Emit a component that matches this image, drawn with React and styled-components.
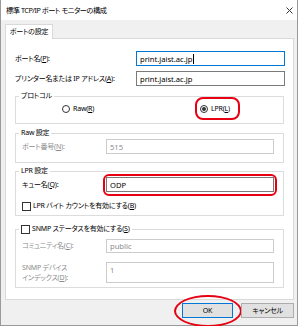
import React from 'react';
import styled, { createGlobalStyle } from 'styled-components';

const GlobalStyle = createGlobalStyle`
  html, body {
    margin: 0;
    padding: 0;
    background: #ffffff;
  }
  body {
    font-family: "Noto Sans", "Noto Sans CJK JP", sans-serif;
    font-size: 7px;
    letter-spacing: -0.2px;
    font-feature-settings: "palt" 1;
    color: #000000;
  }
  u {
    text-underline-offset: 1px;
  }
`;

const App = () => {
  return (
    <>
      <GlobalStyle />
      <Window>
        <TitleBar>
          <Title>標準 TCP/IP ポート モニターの構成</Title>
          <CloseIcon width="7" height="7" viewBox="0 0 7 7">
            <path d="M0.5 0.5 L6.5 6.5 M6.5 0.5 L0.5 6.5" stroke="#333333" strokeWidth="1" />
          </CloseIcon>
        </TitleBar>
        <Body>
          <TabStrip>
            <Tab>ポートの設定</Tab>
          </TabStrip>
          <Panel>
            <FieldRow $top={12}>
              <Label>ポート名(<u>P</u>):</Label>
              <Field $focus>
                print.jaist.ac.jp<Caret />
              </Field>
            </FieldRow>
            <FieldRow $top={5}>
              <Label>プリンター名または IP アドレス(<u>A</u>):</Label>
              <Field>print.jaist.ac.jp</Field>
            </FieldRow>

            <Group $top={4} $height={34}>
              <Legend>プロトコル</Legend>
              <RadioRow>
                <Choice>
                  <Radio />
                  <span>Raw(<u>R</u>)</span>
                </Choice>
                <Choice $marked>
                  <Radio $checked />
                  <span>LPR(<u>L</u>)</span>
                </Choice>
              </RadioRow>
            </Group>

            <Group $top={3} $height={36}>
              <Legend>Raw 設定</Legend>
              <GroupRow $top={0}>
                <Label $disabled>ポート番号(<u>N</u>):</Label>
                <Field $disabled>515</Field>
              </GroupRow>
            </Group>

            <Group $top={2} $height={51}>
              <Legend>LPR 設定</Legend>
              <GroupRow $top={0}>
                <Label>キュー名(<u>Q</u>):</Label>
                <Marked>
                  <Field>ODP</Field>
                </Marked>
              </GroupRow>
              <CheckRow>
                <Check />
                <span>LPR バイト カウントを有効にする(<u>B</u>)</span>
              </CheckRow>
            </Group>

            <Group $top={7} $height={65}>
              <Legend>
                <Check />
                <span>SNMP ステータスを有効にする(<u>S</u>)</span>
              </Legend>
              <GroupRow $top={4} $height={14}>
                <Label $disabled>コミュニティ名(<u>C</u>):</Label>
                <Field $disabled>public</Field>
              </GroupRow>
              <GroupRow $top={9} $height={16}>
                <Label $disabled $stack>
                  SNMP デバイス
                  <br />
                  インデックス(<u>D</u>):
                </Label>
                <Field $disabled $alignTop>1</Field>
              </GroupRow>
            </Group>
          </Panel>
          <ButtonRow>
            <Button $default>OK</Button>
            <Button>キャンセル</Button>
          </ButtonRow>
        </Body>
      </Window>
    </>
  );
};

const Window = styled.div`
  width: 298px;
  height: 326px;
  box-sizing: border-box;
  border: 1px solid #9a9a9a;
  border-top: none;
  display: flex;
  flex-direction: column;
  background: #f0f0f0;
`;

const TitleBar = styled.div`
  height: 20px;
  flex: none;
  background: #ffffff;
  display: flex;
  align-items: center;
  justify-content: space-between;
  padding: 0 4px 0 5px;
`;

const Title = styled.div`
  font-size: 7.2px;
  letter-spacing: -0.45px;
  line-height: 12px;
`;

const CloseIcon = styled.svg`
  display: block;
`;

const Body = styled.div`
  flex: 1;
  display: flex;
  flex-direction: column;
  padding: 4px 3px 0 4px;
`;

const TabStrip = styled.div`
  display: flex;
  height: 14px;
`;

const Tab = styled.div`
  position: relative;
  z-index: 1;
  width: 48px;
  height: 15px;
  box-sizing: border-box;
  background: #ffffff;
  border: 1px solid #d9d9d9;
  border-bottom: none;
  display: flex;
  align-items: center;
  justify-content: center;
  line-height: 12px;
`;

const Panel = styled.div`
  height: 262px;
  box-sizing: border-box;
  background: #ffffff;
  border: 1px solid #d9d9d9;
  padding: 0 9px;
  display: flex;
  flex-direction: column;
`;

const FieldRow = styled.div`
  display: grid;
  grid-template-columns: 121px 1fr;
  align-items: center;
  height: 15px;
  margin-top: ${p => p.$top}px;
  margin-right: -1px;
`;

const Label = styled.div`
  line-height: ${p => (p.$stack ? '10px' : '12px')};
  white-space: nowrap;
  color: ${p => (p.$disabled ? '#8c8c8c' : '#000000')};
  align-self: ${p => (p.$stack ? 'start' : 'center')};
  margin-top: ${p => (p.$stack ? '1px' : '0')};
`;

const Field = styled.div`
  height: 100%;
  box-sizing: border-box;
  background: #ffffff;
  border: 1px solid ${p => (p.$focus ? '#0078d7' : p.$disabled ? '#cccccc' : '#7a7a7a')};
  color: ${p => (p.$disabled ? '#8c8c8c' : '#000000')};
  padding: ${p => (p.$alignTop ? '1px 3px 0' : '0 3px')};
  display: flex;
  align-items: ${p => (p.$alignTop ? 'flex-start' : 'center')};
  line-height: 12px;
  font-family: "Noto Sans", sans-serif;
  font-size: 7.6px;
  letter-spacing: 0;
`;

const Caret = styled.span`
  display: inline-block;
  width: 1px;
  height: 10px;
  background: #000000;
  margin-left: 1px;
`;

const Group = styled.fieldset`
  margin: ${p => p.$top}px 0 0;
  padding: 0 9px 0 6px;
  height: ${p => p.$height}px;
  box-sizing: border-box;
  border: 1px solid #dcdcdc;
  min-width: 0;
`;

const Legend = styled.legend`
  margin-left: -3px;
  padding: 0 2px;
  height: 12px;
  line-height: 12px;
  display: flex;
  align-items: center;
  gap: 2px;
`;

const RadioRow = styled.div`
  display: grid;
  grid-template-columns: 138px auto;
  justify-content: start;
  align-items: center;
  height: 14px;
  padding-left: 40px;
`;

const Choice = styled.div`
  position: relative;
  display: flex;
  align-items: center;
  gap: 3px;
  height: 12px;
  line-height: 12px;
  justify-self: start;

  &::after {
    content: '';
    display: ${p => (p.$marked ? 'block' : 'none')};
    position: absolute;
    left: -5px;
    right: -10px;
    top: -6px;
    bottom: -5px;
    border: 2px solid #e60012;
    border-radius: 8px;
  }
`;

const Radio = styled.span`
  width: 8px;
  height: 8px;
  box-sizing: border-box;
  border: 1px solid #333333;
  border-radius: 50%;
  display: flex;
  align-items: center;
  justify-content: center;

  &::before {
    content: '';
    display: ${p => (p.$checked ? 'block' : 'none')};
    width: 4px;
    height: 4px;
    border-radius: 50%;
    background: #333333;
  }
`;

const GroupRow = styled.div`
  display: grid;
  grid-template-columns: 84px 1fr;
  align-items: center;
  height: ${p => p.$height || 15}px;
  margin-top: ${p => p.$top}px;
`;

const Marked = styled.div`
  position: relative;
  height: 100%;

  &::after {
    content: '';
    position: absolute;
    left: -3px;
    right: -3px;
    top: -3px;
    bottom: -4px;
    border: 2px solid #e60012;
    border-radius: 6px;
  }
`;

const CheckRow = styled.div`
  display: flex;
  align-items: center;
  gap: 2px;
  height: 12px;
  line-height: 12px;
  margin-top: 8px;
`;

const Check = styled.span`
  width: 9px;
  height: 9px;
  box-sizing: border-box;
  border: 1px solid #333333;
  background: #ffffff;
  flex: none;
`;

const ButtonRow = styled.div`
  display: flex;
  justify-content: flex-end;
  gap: 8px;
  margin-top: 3px;
`;

const Button = styled.div`
  position: relative;
  width: ${p => (p.$default ? '51px' : '53px')};
  height: 15px;
  box-sizing: border-box;
  background: #e1e1e1;
  border: 1px solid ${p => (p.$default ? '#0078d7' : '#adadad')};
  display: flex;
  align-items: center;
  justify-content: center;
  line-height: 12px;

  &::after {
    content: '';
    display: ${p => (p.$default ? 'block' : 'none')};
    position: absolute;
    left: -9px;
    right: -10px;
    top: -9px;
    bottom: -10px;
    border: 2px solid #e60012;
    border-radius: 50%;
  }
`;

export default App;
